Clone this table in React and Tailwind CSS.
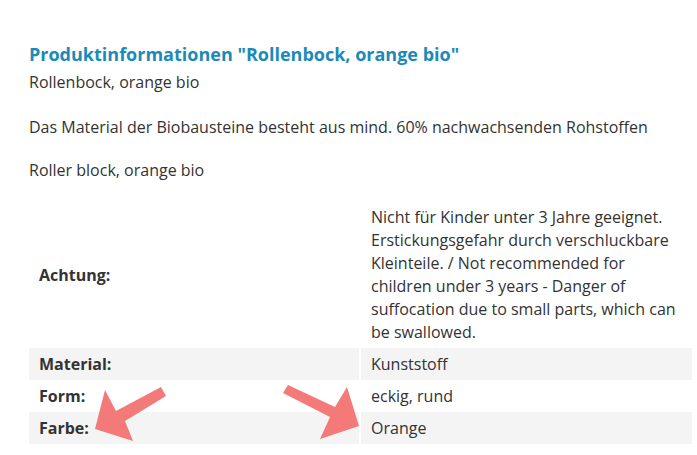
const achtung = [
  "Nicht für Kinder unter 3 Jahre geeignet.",
  "Erstickungsgefahr durch verschluckbare",
  "Kleinteile. / Not recommended for",
  "children under 3 years - Danger of",
  "suffocation due to small parts, which can",
  "be swallowed.",
];

const rows = [
  { label: "Material:", value: "Kunststoff" },
  { label: "Form:", value: "eckig, rund" },
  { label: "Farbe:", value: "Orange" },
];

const Arrows = () => (
  <svg className="absolute left-0 top-0 pointer-events-none" width="697" height="455">
    {/* left arrow */}
    <polygon
      points="161,387 166,396 125,421 133,441 95,429 105,390 116,411"
      fill="#f47a7a"
    />
    {/* right arrow */}
    <polygon
      points="288,385 283,393 330,417 320,439 359,426 347,387 335,407"
      fill="#f47a7a"
    />
  </svg>
);

const App = () => {
  return (
    <div className="relative w-[697px] h-[455px] bg-white font-['Open_Sans',sans-serif] text-[#333] overflow-hidden">
      <div className="pl-[29px] pr-[5px] pt-[41px]">
        <h2 className="text-[18px] font-bold text-[#1b8ab8] leading-[26px]">
          Produktinformationen "Rollenbock, orange bio"
        </h2>
        <p className="text-[16px] leading-[30px]">Rollenbock, orange bio</p>
        <p className="text-[16px] leading-[24px] mt-[18px]">
          Das Material der Biobausteine besteht aus mind. 60% nachwachsenden Rohstoffen
        </p>
        <p className="text-[16px] leading-[24px] mt-[19px]">Roller block, orange bio</p>

        <table className="w-full mt-[20px] border-collapse text-[16px]">
          <tbody>
            <tr className="bg-white">
              <td className="w-[331px] pl-[10px] py-[4px] font-bold align-middle border-r-2 border-white">
                Achtung:
              </td>
              <td className="pl-[10px] pr-[2px] py-[4px] leading-[23px]">
                {achtung.map((line) => (
                  <div key={line} className="whitespace-nowrap">{line}</div>
                ))}
              </td>
            </tr>
            {rows.map((r, i) => (
              <tr key={r.label} className={i % 2 === 0 ? "bg-[#f4f4f4]" : "bg-white"}>
                <td className="w-[331px] pl-[10px] py-[4px] leading-[24px] font-bold align-middle border-r-2 border-white">
                  {r.label}
                </td>
                <td className="pl-[10px] pr-[2px] py-[4px] leading-[24px]">{r.value}</td>
              </tr>
            ))}
          </tbody>
        </table>
      </div>
      <Arrows />
    </div>
  );
};

export default App;
